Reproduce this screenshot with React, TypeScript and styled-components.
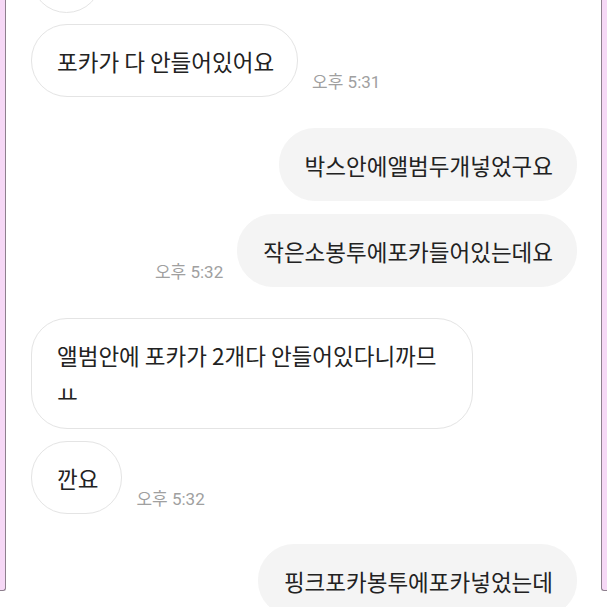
import React from 'react';
import styled, { createGlobalStyle } from 'styled-components';

const GlobalStyle = createGlobalStyle`
  html, body {
    margin: 0;
    padding: 0;
    background: #ffffff;
  }
  body {
    font-family: "Noto Sans CJK KR", "Noto Sans", sans-serif;
  }
`;

const Screen = styled.div`
  display: flex;
  align-items: flex-start;
  width: 607px;
  height: 607px;
  overflow: hidden;
  background: #ffffff;
`;

const Rail = styled.div<{ $side: 'left' | 'right' }>`
  flex: 0 0 auto;
  width: 5px;
  height: 590px;
  background: #f6d8f6;
  border-bottom: 1px solid #8e7f8e;
  ${({ $side }) =>
    $side === 'left'
      ? `border-right: 1px solid #8e7f8e; border-bottom-right-radius: 3px;`
      : `border-left: 1px solid #8e7f8e; border-bottom-left-radius: 3px;`}
`;

const Chat = styled.div`
  flex: 1;
  display: flex;
  flex-direction: column;
  padding: 0 24px 0 25px;
  margin-top: -60px;
`;

const Row = styled.div<{ $mine?: boolean; $gap: number }>`
  display: flex;
  align-items: flex-end;
  justify-content: ${({ $mine }) => ($mine ? 'flex-end' : 'flex-start')};
  gap: 14px;
  margin-top: ${({ $gap }) => $gap}px;
`;

const Bubble = styled.div<{ $mine?: boolean }>`
  box-sizing: border-box;
  max-width: 442px;
  padding: 16.5px 23px 16.5px 25px;
  border-radius: 36px;
  font-size: 22.5px;
  line-height: 38px;
  color: #222222;
  background: ${({ $mine }) => ($mine ? '#f4f4f4' : '#ffffff')};
  border: 1px solid ${({ $mine }) => ($mine ? '#f4f4f4' : '#e4e4e4')};
`;

const Time = styled.span`
  flex: 0 0 auto;
  font-family: Roboto, "Noto Sans CJK KR", sans-serif;
  font-size: 17px;
  line-height: 20px;
  color: #a0a0a0;
  margin-bottom: 5px;
  white-space: nowrap;
`;

type Message = {
  text: string;
  mine?: boolean;
  time?: string;
  gap: number;
};

const messages: Message[] = [
  { text: '네', gap: 0 },
  { text: '포카가 다 안들어있어요', time: '오후 5:31', gap: 11 },
  { text: '박스안에앨범두개넣었구요', mine: true, gap: 31 },
  { text: '작은소봉투에포카들어있는데요', mine: true, time: '오후 5:32', gap: 13 },
  { text: '앨범안에 포카가 2개다 안들어있다니까므ㅛ', gap: 31 },
  { text: '깐요', time: '오후 5:32', gap: 12 },
  { text: '핑크포카봉투에포카넣었는데', mine: true, gap: 30 },
];

export default function App() {
  return (
    <>
      <GlobalStyle />
      <Screen>
        <Rail $side="left" />
        <Chat>
          {messages.map((m, i) => (
            <Row key={i} $mine={m.mine} $gap={m.gap}>
              {m.mine && m.time && <Time>{m.time}</Time>}
              <Bubble $mine={m.mine}>{m.text}</Bubble>
              {!m.mine && m.time && <Time>{m.time}</Time>}
            </Row>
          ))}
        </Chat>
        <Rail $side="right" />
      </Screen>
    </>
  );
}
